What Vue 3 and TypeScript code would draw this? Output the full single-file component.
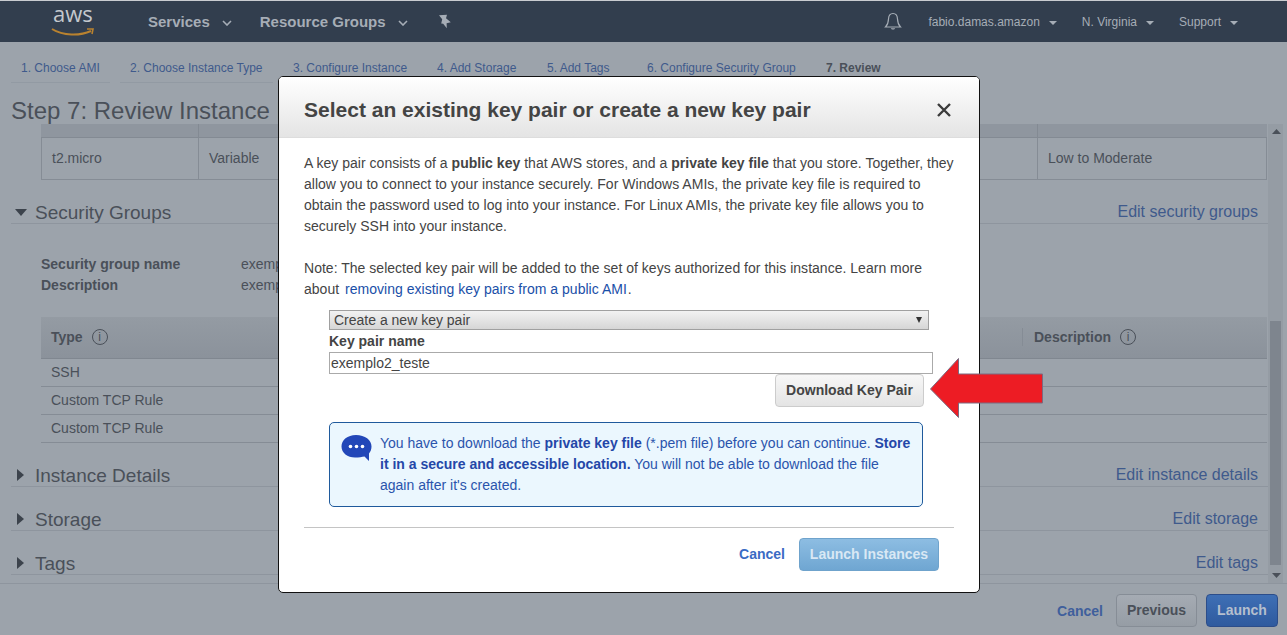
<script setup lang="ts">
const tabs: { label: string; w: number; gap: number; active?: boolean }[] = [
  { label: '1. Choose AMI', w: 99, gap: 10 },
  { label: '2. Choose Instance Type', w: 153, gap: 10 },
  { label: '3. Configure Instance', w: 134, gap: 10 },
  { label: '4. Add Storage', w: 100, gap: 10 },
  { label: '5. Add Tags', w: 84, gap: 16 },
  { label: '6. Configure Security Group', w: 169, gap: 10 },
  { label: '7. Review', w: 70, gap: 0, active: true }
]
const rules = ['SSH', 'Custom TCP Rule', 'Custom TCP Rule']
const collapsed = [
  { name: 'Instance Details', link: 'Edit instance details' },
  { name: 'Storage', link: 'Edit storage' },
  { name: 'Tags', link: 'Edit tags' }
]
</script>

<template>
  <div class="page">
    <header class="top">
      <div class="logo">
        <span class="aws">aws</span>
        <svg class="smile" width="44" height="12" viewBox="0 0 44 12">
          <path d="M1 3C12 10 29 10 40 5" fill="none" stroke="#b9822f" stroke-width="2" />
          <path d="M36 3L42 3L41 8" fill="none" stroke="#b9822f" stroke-width="1.6" />
        </svg>
      </div>
      <span class="nav-b first">Services</span>
      <svg class="chev" width="10" height="6" viewBox="0 0 10 6"><path d="M1 1L5 5L9 1" fill="none" stroke="#a6adb6" stroke-width="1.6" /></svg>
      <span class="nav-b second">Resource Groups</span>
      <svg class="chev" width="10" height="6" viewBox="0 0 10 6"><path d="M1 1L5 5L9 1" fill="none" stroke="#a6adb6" stroke-width="1.6" /></svg>
      <svg class="pin" width="14" height="15" viewBox="0 0 14 15">
        <path d="M1 1.2L9 0.8L8 4.2L12.8 8.2L8.6 9.2L8.8 14.2L5.2 9.8L3.2 9.6L4.2 5.2Z" fill="#a6adb6" />
      </svg>
      <div class="spacer"></div>
      <svg class="bell" width="18" height="20" viewBox="0 0 18 20">
        <path d="M9 1.5C5.8 1.5 4.6 4 4.5 7C4.4 10.5 3.4 13 1.5 15H16.5C14.6 13 13.6 10.5 13.5 7C13.4 4 12.2 1.5 9 1.5Z" fill="none" stroke="#a6adb6" stroke-width="1.2" />
        <path d="M6.8 16.2C7.2 18 10.8 18 11.2 16.2Z" fill="#a6adb6" />
      </svg>
      <span class="nav-r user">fabio.damas.amazon</span><i class="caret"></i>
      <span class="nav-r region">N. Virginia</span><i class="caret"></i>
      <span class="nav-r support">Support</span><i class="caret"></i>
    </header>

    <nav class="tabs">
      <a
        v-for="t in tabs"
        :key="t.label"
        class="tab"
        :class="{ active: t.active }"
        :style="{ width: t.w + 'px', marginRight: t.gap + 'px' }"
      >{{ t.label }}</a>
    </nav>

    <h1 class="title">Step 7: Review Instance Launch</h1>

    <div class="scroll">
      <div class="content">
        <div class="ihead"><span></span><span></span><span></span></div>
        <div class="irow">
          <span class="c1">t2.micro</span>
          <span class="c2">Variable</span>
          <span class="c4">Low to Moderate</span>
        </div>

        <div class="sec sec-open">
          <svg class="tri-d" width="12" height="7" viewBox="0 0 12 7"><path d="M0 0H12L6 7Z" fill="#3c434c" /></svg>
          <span class="sec-name">Security Groups</span>
          <a class="edit">Edit security groups</a>
        </div>

        <dl class="meta">
          <dt>Security group name</dt><dd>exemplo2</dd>
          <dt>Description</dt><dd>exemplo2</dd>
        </dl>

        <div class="rhead">
          <span class="rtype">Type <i class="info">i</i></span>
          <span class="rdesc">Description <i class="info">i</i></span>
        </div>
        <div v-for="(r, i) in rules" :key="i" class="rrow">{{ r }}</div>

        <div v-for="s in collapsed" :key="s.name" class="sec">
          <svg class="tri-r" width="7" height="12" viewBox="0 0 7 12"><path d="M0 0L7 6L0 12Z" fill="#3c434c" /></svg>
          <span class="sec-name">{{ s.name }}</span>
          <a class="edit">{{ s.link }}</a>
        </div>
      </div>
      <div class="sbar">
        <svg width="10" height="6" viewBox="0 0 10 6" class="arr-up"><path d="M0 5H9L4.5 0Z" fill="#4a5059" /></svg>
        <div class="thumb"></div>
        <svg width="10" height="6" viewBox="0 0 10 6" class="arr-dn"><path d="M0 0H9L4.5 5Z" fill="#4a5059" /></svg>
      </div>
    </div>

    <footer class="foot">
      <a class="f-cancel">Cancel</a>
      <span class="f-prev">Previous</span>
      <span class="f-launch">Launch</span>
    </footer>

    <section class="modal">
      <div class="m-head">
        <h2>Select an existing key pair or create a new key pair</h2>
        <svg width="14" height="14" viewBox="0 0 14 14" class="close"><path d="M1 1L13 13M13 1L1 13" stroke="#3b3b3b" stroke-width="2.4" /></svg>
      </div>
      <div class="m-body">
        <p class="p1">A key pair consists of a <b>public key</b> that AWS stores, and a <b>private key file</b> that you store. Together, they allow you to connect to your instance securely. For Windows AMIs, the private key file is required to obtain the password used to log into your instance. For Linux AMIs, the private key file allows you to securely SSH into your instance.</p>
        <p class="p2">Note: The selected key pair will be added to the set of keys authorized for this instance. Learn more about <a class="lnk">removing existing key pairs from a public AMI</a>.</p>
        <div class="form">
          <div class="sel"><span>Create a new key pair</span><i class="sel-arr"></i></div>
          <label class="lbl">Key pair name</label>
          <div class="inp">exemplo2_teste</div>
          <div class="dl-row"><span class="dl">Download Key Pair</span></div>
          <div class="alert">
            <svg class="bubble" width="31" height="28" viewBox="0 0 31 28">
              <path d="M15 1C6.500 1 0.500 6 0.500 12.500C0.500 19 6.500 23.500 14 23.500C18 23.500 21 23 23.500 22.500L28 27L28 19.500C29.500 17.500 30.500 15.500 30.500 12.500C30.500 6 24 1 15 1Z" fill="#2247b8" />
              <circle cx="9.500" cy="12.500" r="1.800" fill="#fff" /><circle cx="15.500" cy="12.500" r="1.800" fill="#fff" /><circle cx="21.500" cy="12.500" r="1.800" fill="#fff" />
            </svg>
            <p>You have to download the <b>private key file</b> (*.pem file) before you can continue. <b>Store it in a secure and accessible location.</b> You will not be able to download the file again after it's created.</p>
          </div>
        </div>
        <div class="m-foot">
          <a class="m-cancel">Cancel</a>
          <span class="m-launch">Launch Instances</span>
        </div>
      </div>
    </section>

    <svg class="arrow" width="116" height="62" viewBox="0 0 116 62">
      <path d="M1.500 32L29.500 1.500V17H113.500V46H29.500V60.500Z" fill="#ed1c24" stroke="#7b6a80" stroke-width="1" />
    </svg>
  </div>
</template>

<style>
html, body { margin: 0; padding: 0; background: #9ca3ab; overflow: hidden; }
</style>

<style scoped>
.page {
  position: relative;
  width: 1287px;
  height: 635px;
  overflow: hidden;
  display: flex;
  flex-direction: column;
  background: #9ca3ab;
  font-family: "Liberation Sans", Arial, sans-serif;
  color: #4a5059;
  border-top: 1px solid #c9ccd0;
  box-sizing: border-box;
}
a { cursor: pointer; }
p { margin: 0; }

.top {
  height: 41px;
  flex: none;
  background: #323e4e;
  display: flex;
  align-items: center;
  color: #a6adb6;
}
.logo { width: 148px; height: 41px; padding-left: 52px; box-sizing: border-box; position: relative; flex: none; }
.aws {
  display: block;
  font-family: "Open Sans", sans-serif;
  font-size: 22px;
  line-height: 25px;
  color: #c4c8cd;
  padding-left: 1px;
}
.smile { position: absolute; left: 51px; top: 25px; }
.nav-b { font-size: 15px; font-weight: 700; }
.nav-b.first { margin-right: 12px; }
.nav-b.second { margin-left: 28px; margin-right: 12px; }
.chev { margin-top: 3px; }
.pin { margin-left: 30px; }
.spacer { flex: 1; }
.bell { margin-right: 26px; }
.nav-r { font-size: 12px; }
.caret {
  width: 0; height: 0;
  border-left: 4px solid transparent;
  border-right: 4px solid transparent;
  border-top: 4px solid #a6adb6;
  margin-left: 9px;
  margin-top: 2px;
}
.user + .caret { margin-right: 25px; }
.region + .caret { margin-right: 25px; }
.support + .caret { margin-right: 49px; }

.tabs { height: 41px; flex: none; display: flex; padding-left: 11px; box-sizing: border-box; }
.tab {
  height: 41px;
  box-sizing: border-box;
  font-size: 12px;
  line-height: 15px;
  padding: 19px 0 0 10px;
  color: #3f5a8c;
  border-bottom: 1px solid #929aa3;
  white-space: nowrap;
}
.tab.active { font-weight: 700; color: #4a5059; border-bottom: 0; }

.title {
  margin: 0;
  height: 41px;
  flex: none;
  padding: 14px 0 0 11px;
  box-sizing: border-box;
  font-size: 24px;
  line-height: 28px;
  font-weight: 400;
  color: #4a5059;
  white-space: nowrap;
}

.scroll { flex: none; height: 459px; display: flex; overflow: hidden; margin-right: 4px; }
.content { flex: none; width: 1268px; box-sizing: border-box; overflow: hidden; padding-left: 11px; }

.ihead {
  margin-left: 30px;
  height: 14px;
  width: 1226px;
  background: #8f969f;
  border-bottom: 1px solid #838a93;
  box-sizing: border-box;
  display: grid;
  grid-template-columns: 158px 838px 1fr;
}
.ihead span:first-child { border-right: 1px solid #838a93; }
.ihead span:last-child { border-left: 1px solid #838a93; }
.irow {
  margin-left: 30px;
  width: 1226px;
  height: 42px;
  box-sizing: border-box;
  border: 1px solid #858c95;
  border-top: 0;
  display: grid;
  grid-template-columns: 157px 838px 1fr;
  font-size: 14px;
}
.c1 { padding-left: 10px; height: 41px; line-height: 40px; border-right: 1px solid #858c95; }
.c2 { padding-left: 10px; height: 41px; line-height: 40px; }
.c4 { padding-left: 10px; height: 41px; line-height: 40px; border-left: 1px solid #858c95; }

.sec {
  height: 44px;
  box-sizing: border-box;
  border-bottom: 1px solid #8e959e;
  display: flex;
  align-items: flex-end;
  position: relative;
  padding-left: 24px;
}
.sec-name { font-size: 19px; line-height: 22px; margin-bottom: -1px; color: #4a5059; }
.edit { margin-left: auto; margin-right: 10px; font-size: 16px; line-height: 22px; color: #3f5a8c; }
.tri-d { position: absolute; left: 4px; bottom: 7px; }
.tri-r { position: absolute; left: 6px; bottom: 5px; }

.meta {
  margin: 30px 0 0 30px;
  display: grid;
  grid-template-columns: 200px 1fr;
  font-size: 14px;
  line-height: 21px;
  height: 42px;
}
.meta dt { font-weight: 700; }
.meta dd { margin: 0; }

.rhead {
  margin: 21px 0 0 30px;
  height: 42px;
  width: 1226px;
  box-sizing: border-box;
  padding-bottom: 2px;
  background: linear-gradient(#949ba3, #8b929b);
  border-bottom: 1px solid #808790;
  display: flex;
  align-items: center;
  font-size: 14px;
  font-weight: 700;
}
.rtype { padding-left: 10px; display: flex; align-items: center; }
.rdesc {
  margin-left: auto;
  width: 245px;
  box-sizing: border-box;
  border-left: 1px solid #858c95;
  padding-left: 11px;
  height: 18px;
  display: flex;
  align-items: center;
}
.info {
  display: inline-block;
  box-sizing: border-box;
  width: 16px;
  height: 16px;
  border: 1px solid #4a5059;
  border-radius: 50%;
  margin-left: 9px;
  font-style: normal;
  font-weight: 400;
  font-size: 12px;
  line-height: 14px;
  text-align: center;
}
.rrow {
  margin-left: 30px;
  width: 1226px;
  height: 28px;
  box-sizing: border-box;
  border-bottom: 1px solid #858c95;
  font-size: 14px;
  line-height: 26px;
  padding-left: 10px;
}

.sbar {
  width: 15px;
  flex: none;
  background: #959ca4;
  position: relative;
}
.arr-up { position: absolute; top: 5px; left: 4px; }
.arr-dn { position: absolute; bottom: 4px; left: 4px; }
.thumb {
  position: absolute;
  top: 197px;
  left: 2px;
  width: 11px;
  height: 244px;
  background: #7e858e;
}

.foot {
  flex: 1;
  border-top: 1px solid #8e959e;
  display: flex;
  align-items: center;
  justify-content: flex-end;
  padding: 2px 9px 0 0;
  font-size: 14px;
  font-weight: 700;
}
.f-cancel { color: #3f5f9c; margin-right: 13px; }
.f-prev {
  width: 81px;
  height: 33px;
  box-sizing: border-box;
  border: 1px solid #868d96;
  border-radius: 4px;
  background: linear-gradient(#a5abb3, #969da5);
  text-align: center;
  line-height: 31px;
  color: #4a5059;
  margin-right: 9px;
}
.f-launch {
  width: 72px;
  height: 33px;
  box-sizing: border-box;
  border: 1px solid #2c4d8a;
  border-radius: 4px;
  background: linear-gradient(#3e6fb5, #2f5a9e);
  text-align: center;
  line-height: 31px;
  color: #b5bfce;
}

.modal {
  position: absolute;
  left: 278px;
  top: 75px;
  width: 702px;
  height: 517px;
  box-sizing: border-box;
  background: #fff;
  border: 1px solid #111;
  border-radius: 5px;
  overflow: hidden;
  color: #444;
}
.m-head {
  height: 61px;
  box-sizing: border-box;
  background: linear-gradient(#fff, #e4e4e4);
  border-bottom: 1px solid #ddd;
  padding: 5px 25px 0;
  display: flex;
  align-items: center;
  justify-content: space-between;
}
.m-head h2 { margin: 0; font-size: 21px; line-height: 26px; font-weight: 700; color: #444; }
.close { margin-right: 3px; }
.m-body { padding: 15px 25px 0; font-size: 14px; line-height: 21px; }
.p1 { letter-spacing: 0.02px; }
.p2 { margin-top: 21px; letter-spacing: 0.02px; }
.lnk { color: #1a4fa8; margin-left: 2px; margin-right: 1px; }
.form { margin-left: 25px; margin-top: 10px; }
.sel {
  width: 600px;
  height: 20px;
  box-sizing: border-box;
  border: 1px solid #a0a0a0;
  background: linear-gradient(#f2f2f2, #d6d6d6);
  display: flex;
  align-items: center;
  justify-content: space-between;
  padding: 0 6px 0 4px;
  line-height: 18px;
}
.sel-arr {
  width: 0; height: 0;
  border-left: 3.5px solid transparent;
  border-right: 3.5px solid transparent;
  border-top: 6px solid #333;
}
.lbl { display: block; font-weight: 700; line-height: 23px; height: 22px; }
.inp {
  width: 604px;
  height: 22px;
  box-sizing: border-box;
  border: 1px solid #aaa;
  padding-left: 1px;
  line-height: 20px;
}
.dl-row { width: 595px; display: flex; justify-content: flex-end; }
.dl {
  width: 149px;
  height: 33px;
  box-sizing: border-box;
  border: 1px solid #ccc;
  border-radius: 4px;
  background: linear-gradient(#f7f7f7, #e4e4e4);
  font-weight: 700;
  text-align: center;
  line-height: 30px;
  color: #444;
}
.alert {
  margin-top: 15px;
  width: 594px;
  height: 85px;
  box-sizing: border-box;
  border: 1px solid #1f5a9c;
  border-radius: 5px;
  background: #ebf7fe;
  padding: 10px 8px 0 11px;
  display: flex;
  color: #2a54ac;
}
.alert b { color: #2447a8; }
.bubble { flex: none; margin-right: 8px; margin-top: 1px; }
.m-foot {
  margin-top: 20px;
  border-top: 1px solid #c4c4c4;
  padding: 10px 15px 0 0;
  display: flex;
  align-items: center;
  justify-content: flex-end;
  font-weight: 700;
}
.m-cancel { color: #3a6bc4; margin-right: 14px; }
.m-launch {
  width: 140px;
  height: 33px;
  box-sizing: border-box;
  border: 1px solid #6fa3cc;
  border-radius: 4px;
  background: linear-gradient(#8dbde2, #6fa6d2);
  color: #d9e8f4;
  text-align: center;
  line-height: 31px;
}
.arrow { position: absolute; left: 929px; top: 356px; }
</style>
